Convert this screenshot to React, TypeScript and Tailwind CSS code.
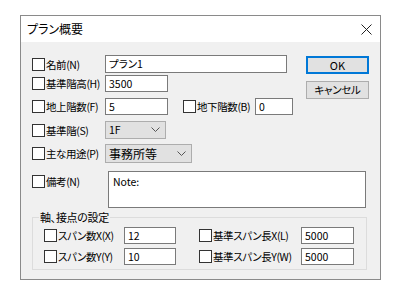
import React from "react";

const font = "[font-family:'Noto_Sans_CJK_JP','Noto_Sans',sans-serif] [font-feature-settings:'palt']";

function Cb() {
  return <span className="inline-block w-[13px] h-[13px] border border-[#333333] bg-white shrink-0" />;
}

function Label({ text, hint }: { text: string; hint: string }) {
  return (
    <span className="ml-[1px] text-[10.5px] leading-[13px] tracking-[-0.4px] text-black whitespace-nowrap">
      {text}
      {hint}
    </span>
  );
}

function Input({ w, h, value }: { w: string; h: string; value: string }) {
  return (
    <div className={`${w} ${h} border border-[#7a7a7a] bg-white flex items-center pl-[3px] text-[10.5px] text-black`}>
      {value}
    </div>
  );
}

function Chevron() {
  return (
    <svg width="9" height="6" viewBox="0 0 9 6" className="shrink-0">
      <path d="M0.5 0.5 L4.5 4.5 L8.5 0.5" fill="none" stroke="#555" strokeWidth="1" />
    </svg>
  );
}

function Select({ w, h, value, size }: { w: string; h: string; value: string; size: string }) {
  return (
    <div className={`${w} ${h} border border-[#adadad] bg-[#e1e1e1] flex items-center justify-between pl-[3px] pr-[5px] ${size} text-black`}>
      <span>{value}</span>
      <Chevron />
    </div>
  );
}

export default function App() {
  return (
    <div className={`w-[402px] h-[303px] bg-white pt-[15px] pl-[20px] ${font}`}>
      <div className="w-[361px] h-[265px] border border-[#8a8a8a] bg-[#f0f0f0] flex flex-col">
        <div className="h-[26px] bg-white flex items-center justify-between pl-[6px] pr-[8px]">
          <span className="text-[12px] text-black">プラン概要</span>
          <svg width="11" height="11" viewBox="0 0 11 11">
            <path d="M0.5 0.5 L10.5 10.5 M10.5 0.5 L0.5 10.5" stroke="#222" strokeWidth="1" />
          </svg>
        </div>
        <div className="flex flex-col pl-[11px] pr-[13px]">
          <div className="flex">
            <div className="flex flex-col">
              <div className="mt-[13px] h-[18px] flex items-center">
                <div className="w-[73px] flex items-center"><Cb /><Label text="名前" hint="(N)" /></div>
                <Input w="w-[182px]" h="h-[18px]" value="プラン1" />
              </div>
              <div className="mt-[2px] h-[17px] flex items-center">
                <div className="w-[73px] flex items-center"><Cb /><Label text="基準階高" hint="(H)" /></div>
                <Input w="w-[63px]" h="h-[17px]" value="3500" />
              </div>
              <div className="mt-[6px] h-[17px] flex items-center">
                <div className="w-[73px] flex items-center"><Cb /><Label text="地上階数" hint="(F)" /></div>
                <Input w="w-[63px]" h="h-[17px]" value="5" />
                <div className="ml-[15px] w-[72px] flex items-center"><Cb /><Label text="地下階数" hint="(B)" /></div>
                <Input w="w-[38px]" h="h-[17px]" value="0" />
              </div>
              <div className="mt-[6px] h-[18px] flex items-center">
                <div className="w-[73px] flex items-center"><Cb /><Label text="基準階" hint="(S)" /></div>
                <Select w="w-[61px]" h="h-[18px]" value="1F" size="text-[10.5px]" />
              </div>
              <div className="mt-[5px] h-[19px] flex items-center">
                <div className="w-[73px] flex items-center"><Cb /><Label text="主な用途" hint="(P)" /></div>
                <Select w="w-[87px]" h="h-[19px]" value="事務所等" size="text-[12px]" />
              </div>
            </div>
            <div className="ml-auto mr-[-2px] flex flex-col">
              <div className="mt-[14px] w-[63px] h-[18px] border-2 border-[#0078d7] bg-[#e1e1e1] flex items-center justify-center text-[11px] text-black">OK</div>
              <div className="mt-[7px] w-[63px] h-[18px] border border-[#adadad] bg-[#e1e1e1] flex items-center justify-center text-[10.5px] tracking-[-0.3px] text-black">キャンセル</div>
            </div>
          </div>
          <div className="mt-[8px] flex items-start">
            <div className="w-[76px] pt-[4px] flex items-center"><Cb /><Label text="備考" hint="(N)" /></div>
            <div className="w-[258px] h-[37px] border border-[#7a7a7a] bg-white pl-[4px] pt-[3px] text-[10.5px] leading-[13px] text-black">Note:</div>
          </div>
          <fieldset className="mt-[2px] w-[335px] border border-[#dcdcdc] pl-[11px] pb-[4px]">
            <legend className="ml-[-5px] px-[1px] text-[11px] leading-[14px] tracking-[-0.3px] text-black">軸、接点の設定</legend>
            <div className="mt-[3px] h-[17px] flex items-center">
              <div className="w-[80px] flex items-center"><Cb /><Label text="スパン数X" hint="(X)" /></div>
              <Input w="w-[52px]" h="h-[17px]" value="12" />
              <div className="ml-[23px] w-[102px] flex items-center"><Cb /><Label text="基準スパン長X" hint="(L)" /></div>
              <Input w="w-[53px]" h="h-[17px]" value="5000" />
            </div>
            <div className="mt-[4px] h-[17px] flex items-center">
              <div className="w-[80px] flex items-center"><Cb /><Label text="スパン数Y" hint="(Y)" /></div>
              <Input w="w-[52px]" h="h-[17px]" value="10" />
              <div className="ml-[23px] w-[102px] flex items-center"><Cb /><Label text="基準スパン長Y" hint="(W)" /></div>
              <Input w="w-[53px]" h="h-[17px]" value="5000" />
            </div>
          </fieldset>
        </div>
      </div>
    </div>
  );
}
